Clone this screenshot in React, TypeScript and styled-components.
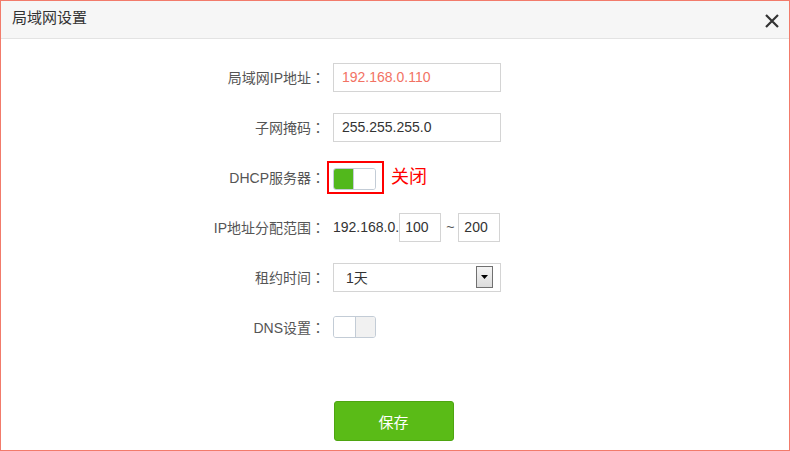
import React from "react";
import styled, { createGlobalStyle } from "styled-components";

const Global = createGlobalStyle`
  html, body { margin: 0; padding: 0; background: #fff; }
  body { font-family: "Liberation Sans", "Noto Sans CJK SC", sans-serif; }
  * { box-sizing: border-box; }
`;

const Frame = styled.div`
  width: 790px;
  height: 451px;
  border: 1px solid #f27b6b;
  display: flex;
  flex-direction: column;
  background: #fff;
`;

const Header = styled.div`
  height: 38px;
  flex: none;
  background: #f6f6f6;
  border-bottom: 1px solid #e3e3e3;
  display: flex;
  align-items: center;
  justify-content: space-between;
  padding: 0 9px 0 11px;
`;

const Title = styled.span`
  font-size: 15px;
  color: #333;
  line-height: 20px;
  margin-top: -3px;
`;

const Close = styled.button`
  border: 0;
  background: none;
  padding: 0;
  width: 16px;
  height: 16px;
  display: flex;
  margin-top: 3px;
  cursor: pointer;
`;

const Body = styled.div`
  flex: 1;
  display: flex;
  flex-direction: column;
  padding-top: 13px;
`;

const Row = styled.div`
  height: 50px;
  display: grid;
  grid-template-columns: 324px 1fr;
  column-gap: 8px;
  align-items: center;
`;

const Label = styled.span`
  text-align: right;
  font-size: 14px;
  color: #555;
  line-height: 20px;
`;

const Colon = styled.span`
  font-family: "Noto Sans CJK JP", sans-serif;
`;

const Field = styled.div`
  display: flex;
  align-items: center;
`;

const TextInput = styled.div<{ $w?: number; $color?: string; $pad?: number }>`
  width: ${(p) => p.$w ?? 168}px;
  height: 29px;
  border: 1px solid #d4d4d4;
  padding-left: ${(p) => p.$pad ?? 8}px;
  display: flex;
  align-items: center;
  font-size: 14px;
  color: ${(p) => p.$color ?? "#333"};
  background: #fff;
`;

const Highlight = styled.span`
  display: inline-flex;
  border: 2px solid #f00;
  padding: 5px 6px 2px 4px;
  margin-left: -6px;
`;

const Switch = styled.span<{ $on?: boolean }>`
  width: 43px;
  height: 22px;
  border: 1px solid #c3ccd6;
  border-radius: 3px;
  display: flex;
  overflow: hidden;
  flex-direction: ${(p) => (p.$on ? "row" : "row-reverse")};
`;

const Track = styled.span<{ $on?: boolean }>`
  flex: 1;
  background: ${(p) => (p.$on ? "#52b81c" : "#f1f1f1")};
`;

const Knob = styled.span<{ $on?: boolean }>`
  width: 22px;
  background: #fff;
  ${(p) => (p.$on ? "border-left" : "border-right")}: 1px solid #c3ccd6;
`;

const State = styled.span`
  margin-left: 7px;
  font-size: 18px;
  color: #f00;
  line-height: 22px;
`;

const Plain = styled.span`
  font-size: 14px;
  color: #333;
`;

const Tilde = styled.span`
  font-size: 14px;
  color: #555;
  margin: 0 4px 0 5px;
`;

const Select = styled.div`
  width: 168px;
  height: 29px;
  border: 1px solid #d4d4d4;
  padding: 0 7px 0 12px;
  display: flex;
  align-items: center;
  justify-content: space-between;
  font-size: 14px;
  color: #333;
`;

const ArrowBox = styled.span`
  width: 17px;
  height: 22px;
  border: 1px solid #707070;
  background: linear-gradient(#f4f4f4, #dcdcdc);
  display: flex;
  align-items: center;
  justify-content: center;
`;

const Footer = styled.div`
  display: flex;
  justify-content: center;
  margin-top: 49px;
`;

const Save = styled.button`
  width: 120px;
  height: 40px;
  background: #5abb17;
  border: 1px solid #4ea511;
  border-radius: 3px;
  color: #fff;
  font-size: 15px;
  font-family: "Liberation Sans", "Noto Sans CJK SC", sans-serif;
  cursor: pointer;
  margin-left: -3px;
`;

const Lbl = ({ children }: { children: React.ReactNode }) => (
  <Label>
    {children}
    <Colon>：</Colon>
  </Label>
);

export default function App() {
  return (
    <>
      <Global />
      <Frame>
        <Header>
          <Title>局域网设置</Title>
          <Close aria-label="关闭">
            <svg width="16" height="16" viewBox="0 0 16 16">
              <path d="M2 2 L14 14 M14 2 L2 14" stroke="#333" strokeWidth="2.2" />
            </svg>
          </Close>
        </Header>
        <Body>
          <Row>
            <Lbl>局域网IP地址</Lbl>
            <Field>
              <TextInput $color="#f27264">192.168.0.110</TextInput>
            </Field>
          </Row>
          <Row>
            <Lbl>子网掩码</Lbl>
            <Field>
              <TextInput>255.255.255.0</TextInput>
            </Field>
          </Row>
          <Row>
            <Lbl>DHCP服务器</Lbl>
            <Field>
              <Highlight>
                <Switch $on>
                  <Track $on />
                  <Knob $on />
                </Switch>
              </Highlight>
              <State>关闭</State>
            </Field>
          </Row>
          <Row>
            <Lbl>IP地址分配范围</Lbl>
            <Field>
              <Plain>192.168.0.</Plain>
              <TextInput $w={42} $pad={5}>100</TextInput>
              <Tilde>~</Tilde>
              <TextInput $w={42} $pad={5}>200</TextInput>
            </Field>
          </Row>
          <Row>
            <Lbl>租约时间</Lbl>
            <Field>
              <Select>
                <span>1天</span>
                <ArrowBox>
                  <svg width="7" height="4" viewBox="0 0 7 4">
                    <path d="M0 0 H7 L3.5 4 Z" fill="#000" />
                  </svg>
                </ArrowBox>
              </Select>
            </Field>
          </Row>
          <Row>
            <Lbl>DNS设置</Lbl>
            <Field>
              <Switch>
                <Track />
                <Knob />
              </Switch>
            </Field>
          </Row>
          <Footer>
            <Save>保存</Save>
          </Footer>
        </Body>
      </Frame>
    </>
  );
}
